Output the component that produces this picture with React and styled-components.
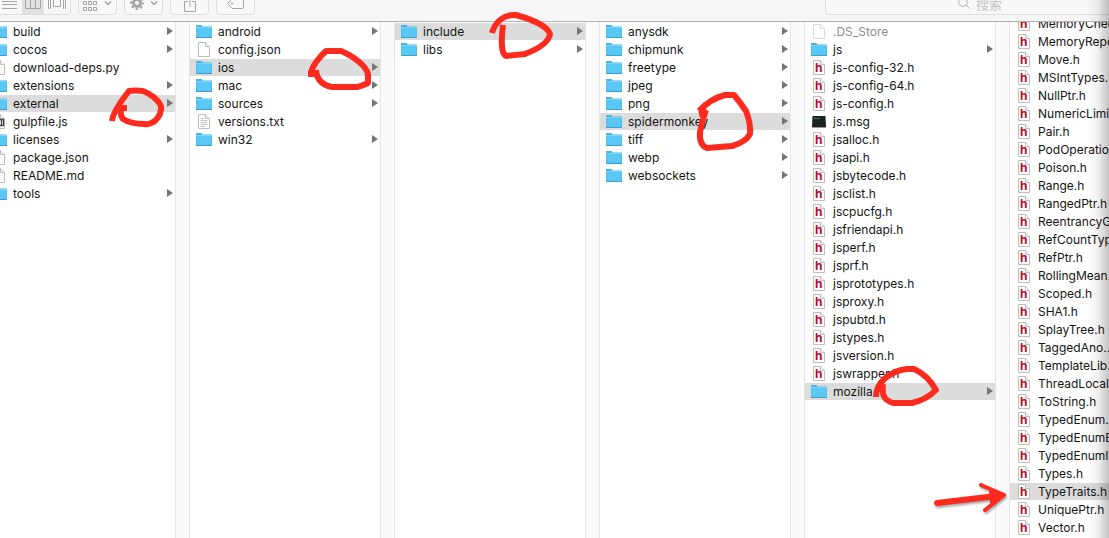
import React from 'react'
import styled, { createGlobalStyle, css } from 'styled-components'

const GlobalStyle = createGlobalStyle`
    * {
        box-sizing: border-box;
    }
    body {
        margin: 0;
        overflow: hidden;
        background-color: #fff;
        font-family: Inter, "Noto Sans CJK SC", sans-serif;
    }
`

const Window = styled.main`
    position: relative;
    display: flex;
    flex-direction: column;
    height: 100vh;
    overflow: hidden;
`

const Toolbar = styled.header`
    display: flex;
    align-items: flex-end;
    flex: none;
    gap: 7px;
    height: 22px;
    padding-bottom: 6px;
    overflow: hidden;
    background-color: #f6f6f6;
    border-bottom: 1px solid #b1b1b1;
`

const ToolButton = styled.button`
    display: flex;
    align-items: center;
    justify-content: center;
    flex: none;
    gap: 6px;
    width: 39px;
    height: 24px;
    padding: 0;
    color: #a5a5a5;
    background-color: #f8f8f8;
    border: 1px solid #dcdcdc;
    border-radius: 4px;
`

const Segments = styled.div`
    display: flex;
    flex: none;
    height: 24px;
    margin-left: -4px;
    overflow: hidden;
    border: 1px solid #dcdcdc;
    border-radius: 4px;
`

const Segment = styled.button`
    display: flex;
    align-items: center;
    justify-content: center;
    width: ${props => props.$width};
    padding: 0;
    color: #a5a5a5;
    background-color: ${props => props.$active ? '#e1e1e1' : '#f8f8f8'};
    border: 0;
`

const SearchBox = styled.label`
    display: flex;
    align-items: center;
    justify-content: center;
    flex: none;
    gap: 6px;
    width: 310px;
    height: 24px;
    margin-left: auto;
    margin-right: -26px;
    color: #b4b4b4;
    background-color: #f8f8f8;
    border: 1px solid #dcdcdc;
    border-radius: 4px;
`

const SearchInput = styled.input`
    width: 26px;
    height: 20px;
    padding: 0;
    font: 13px "Noto Sans CJK SC", sans-serif;
    background: none;
    border: 0;
    outline: 0;
    &::placeholder {
        color: #c4c4c4;
        opacity: 1;
    }
`

const Browser = styled.div`
    display: flex;
    flex: 1;
    min-height: 0;
    margin-left: -15px;
`

const Column = styled.ul`
    flex: ${props => props.$last ? '1 0 99px' : '0 0 190px'};
    min-width: 0;
    margin: 0;
    padding: 1px 0 0;
    overflow: hidden;
    list-style: none;
    background-color: #fff;
`

const Gutter = styled.div`
    flex: 0 0 15px;
    background-color: #fafafa;
    border: solid #e6e6e6;
    border-width: 0 1px;
`

const Item = styled.li`
    margin-bottom: 1px;
    &:first-child {
        margin-top: ${props => props.$scrolled ? '-8px' : '0'};
    }
`

const Row = styled.a`
    display: flex;
    align-items: center;
    height: 17px;
    padding-left: 6px;
    color: #141414;
    font-size: 12px;
    line-height: 17px;
    text-decoration: none;
    ${props => props.$selected && css`
        background-color: #dcdcdc;
    `}
    ${props => props.$faded && css`
        color: #8c8c8c;
    `}
`

const Name = styled.span`
    flex: 1;
    min-width: 0;
    margin-left: 6px;
    white-space: nowrap;
`

const Icon = styled.svg`
    flex: none;
    width: 16px;
    height: 17px;
    opacity: ${props => props.$faded ? 0.55 : 1};
`

const Arrow = styled.svg`
    flex: none;
    width: 6px;
    height: 9px;
    margin-right: 2px;
    fill: #757575;
`

const Glyph = styled.svg`
    flex: none;
    fill: none;
    stroke: currentColor;
`

const Markup = styled.svg`
    position: absolute;
    top: 0;
    left: 0;
    width: 1109px;
    height: 538px;
    pointer-events: none;
    fill: none;
    stroke: #fe2a1e;
    stroke-width: 6;
    stroke-linejoin: round;
`

const EdgeShade = styled.div`
    position: absolute;
    top: 0;
    right: 0;
    bottom: 0;
    width: 22px;
    pointer-events: none;
    background: linear-gradient(to right, rgba(0, 0, 0, 0), rgba(0, 0, 0, 0.06) 50%, rgba(0, 0, 0, 0.24));
`

const Folder = () => (
    <Icon viewBox="0 0 16 17" aria-hidden="true">
        <path d="M0 15V2.5Q0 2 .6 2H5.4L6.6 3.4H15.4Q16 3.4 16 4V15Z" fill="#47b3e0" />
        <path d="M.5 5H15.5V14H.5Z" fill="#5ac8f5" />
        <path d="M0 4.5H16" stroke="#7ad5f8" />
        <path d="M0 14.5H16" stroke="#399fc8" />
    </Icon>
)

const Page = ({ faded, children }) => (
    <Icon viewBox="0 0 16 17" aria-hidden="true" $faded={faded}>
        <path d="M2.5 1.5H9.5L13.5 5.5V15.5H2.5Z" fill="#fff" stroke="#bdbdbd" />
        <path d="M9.5 1.5V5.5H13.5" fill="#f4f4f4" stroke="#bdbdbd" />
        {children}
    </Icon>
)

const Header = () => (
    <Page>
        <text x="4" y="13" fill="#b30d2c" fontFamily="Inter, sans-serif" fontSize="12" fontWeight="700">h</text>
    </Page>
)

const TextPage = () => (
    <Page>
        <path d="M4.5 5.5H8M4.5 7.5H11.5M4.5 9.5H11.5M4.5 11.5H11.5M4.5 13.5H9" stroke="#c4c4c4" />
    </Page>
)

const Script = () => (
    <Page>
        <path d="M8 6.5H12.5V12.5H9M10.500 7V12" fill="none" stroke="#444" strokeWidth="1.3" />
    </Page>
)

const Terminal = () => (
    <Icon viewBox="0 0 16 17" aria-hidden="true">
        <path d="M1.5 3H14.5L15 14H1Z" fill="#1d2122" />
        <path d="M1 14.5H15" stroke="#989898" />
        <path d="M3 5.5H9" stroke="#2f9c60" strokeDasharray="2 .5" />
    </Icon>
)

const icons = {
    folder: Folder,
    page: Page,
    header: Header,
    text: TextPage,
    script: Script,
    terminal: Terminal,
}

const folders = names => names.map(name => ({ name, kind: 'folder' }))
const headers = names => names.map(name => ({ name, kind: 'header' }))

const columns = [
    {
        title: 'project',
        selected: 'external',
        items: [
            ...folders(['build', 'cocos']),
            { name: 'download-deps.py', kind: 'page' },
            ...folders(['extensions', 'external']),
            { name: 'gulpfile.js', kind: 'script' },
            ...folders(['licenses']),
            { name: 'package.json', kind: 'page' },
            { name: 'README.md', kind: 'page' },
            ...folders(['tools']),
        ],
    },
    {
        title: 'external',
        selected: 'ios',
        items: [
            ...folders(['android']),
            { name: 'config.json', kind: 'page' },
            ...folders(['ios', 'mac', 'sources']),
            { name: 'versions.txt', kind: 'text' },
            ...folders(['win32']),
        ],
    },
    {
        title: 'ios',
        selected: 'include',
        items: folders(['include', 'libs']),
    },
    {
        title: 'include',
        selected: 'spidermonkey',
        items: folders(['anysdk', 'chipmunk', 'freetype', 'jpeg', 'png', 'spidermonkey', 'tiff', 'webp', 'websockets']),
    },
    {
        title: 'spidermonkey',
        selected: 'mozilla',
        items: [
            { name: '.DS_Store', kind: 'page', faded: true },
            ...folders(['js']),
            ...headers(['js-config-32.h', 'js-config-64.h', 'js-config.h']),
            { name: 'js.msg', kind: 'terminal' },
            ...headers([
                'jsalloc.h', 'jsapi.h', 'jsbytecode.h', 'jsclist.h', 'jscpucfg.h', 'jsfriendapi.h', 'jsperf.h',
                'jsprf.h', 'jsprototypes.h', 'jsproxy.h', 'jspubtd.h', 'jstypes.h', 'jsversion.h', 'jswrapper.h',
            ]),
            ...folders(['mozilla']),
        ],
    },
    {
        title: 'mozilla',
        selected: 'TypeTraits.h',
        scrolled: true,
        items: headers([
            'MemoryChecking.h', 'MemoryReporting.h', 'Move.h', 'MSIntTypes.h', 'NullPtr.h', 'NumericLimits.h',
            'Pair.h', 'PodOperations.h', 'Poison.h', 'Range.h', 'RangedPtr.h', 'ReentrancyGuard.h',
            'RefCountType.h', 'RefPtr.h', 'RollingMean.h', 'Scoped.h', 'SHA1.h', 'SplayTree.h', 'TaggedAno...',
            'TemplateLib.h', 'ThreadLocal.h', 'ToString.h', 'TypedEnum.h', 'TypedEnumBits.h',
            'TypedEnumInternal.h', 'Types.h', 'TypeTraits.h', 'UniquePtr.h', 'Vector.h',
        ]),
    },
]

const Chevron = () => (
    <Glyph width={8} height={5} viewBox="0 0 8 5" strokeWidth="1.5"><path d="M1 .5L4 3.5L7 .5" /></Glyph>
)

const FinderToolbar = () => (
    <Toolbar>
        <Segments>
            <Segment $width="25px" aria-label="List">
                <Glyph width={15} height={12} viewBox="0 0 15 12"><path d="M0 .5H15M0 4.5H15M0 7.5H15M0 11.5H15" /></Glyph>
            </Segment>
            <Segment $width="22px" $active aria-label="Columns">
                <Glyph width={16} height={12} viewBox="0 0 16 12"><path d="M.5 .5H15.5V11.5H.5ZM5.5 0V12M10.5 0V12" /></Glyph>
            </Segment>
            <Segment $width="26px" aria-label="Cover flow">
                <Glyph width={18} height={12} viewBox="0 0 18 12"><path d="M.5 0V12M2.5 0V12M5.5 1.5H12.5V9.5H5.5ZM15.5 0V12M17.5 0V12" /></Glyph>
            </Segment>
        </Segments>
        <ToolButton aria-label="Arrange">
            <Glyph width={15} height={16} viewBox="0 0 15 16">
                <path d="M.5 .5H3.5V3.5H.5ZM5.5 .5H8.5V3.5H5.5ZM10.5 .5H13.5V3.5H10.5ZM.5 6.5H3.5V9.5H.5ZM5.5 6.5H8.5V9.5H5.5ZM10.5 6.5H13.5V9.5H10.5ZM.5 12.5H3.5V15.5H.5ZM5.5 12.5H8.5V15.5H5.5ZM10.5 12.5H13.5V15.5H10.5Z" />
            </Glyph>
            <Chevron />
        </ToolButton>
        <ToolButton aria-label="Action">
            <Glyph width={14} height={14} viewBox="0 0 14 14">
                <circle cx="7" cy="7" r="3.5" strokeWidth="3" />
                <circle cx="7" cy="7" r="6" strokeWidth="2" strokeDasharray="2.5 2.21" strokeDashoffset="1.25" />
            </Glyph>
            <Chevron />
        </ToolButton>
        <ToolButton aria-label="Share">
            <Glyph width={12} height={17} viewBox="0 0 12 17"><path d="M4 6.5H.5V16.5H11.5V6.5H8M6 12V1M3 4L6 1L9 4" /></Glyph>
        </ToolButton>
        <ToolButton aria-label="Tags">
            <Glyph width={17} height={11} viewBox="0 0 17 11"><path d="M5 .5H15Q16.5 .5 16.5 2V9Q16.5 10.5 15 10.5H5L.7 5.5Z" /><circle cx="5" cy="5.5" r=".8" /></Glyph>
        </ToolButton>
        <SearchBox>
            <Glyph width={12} height={12} viewBox="0 0 12 12"><circle cx="5" cy="5" r="4.3" /><path d="M8 8L11.5 11.5" /></Glyph>
            <SearchInput placeholder="搜索" aria-label="搜索" />
        </SearchBox>
    </Toolbar>
)

const FileRow = ({ item, selected, showArrow }) => {
    const Kind = icons[item.kind]
    return (
        <Row href="#" $selected={selected} $faded={item.faded}>
            <Kind faded={item.faded} />
            <Name>{item.name}</Name>
            {showArrow && (
                <Arrow viewBox="0 0 6 9" aria-hidden="true"><path d="M0 0L6 4L0 8Z" /></Arrow>
            )}
        </Row>
    )
}

const App = () => {
    return (
        <Window>
            <GlobalStyle />
            <FinderToolbar />
            <Browser>
                {columns.map((column, index) => (
                    <React.Fragment key={column.title}>
                        {index > 0 && <Gutter />}
                        <Column aria-label={column.title} $last={index === columns.length - 1}>
                            {column.items.map(item => (
                                <Item key={item.name} $scrolled={column.scrolled}>
                                    <FileRow
                                        item={item}
                                        selected={item.name === column.selected}
                                        showArrow={item.kind === 'folder'}
                                    />
                                </Item>
                            ))}
                        </Column>
                    </React.Fragment>
                ))}
            </Browser>
            <EdgeShade />
            <Markup viewBox="0 0 1109 538" aria-hidden="true">
                <path d="M112 121C113 112 121 101 129 91Q136 90 143 91Q156 96 161 106Q162 114 155 121Q149 125 144 124Q131 124 123 119Q119 113 122 108H127" />
                <path d="M308 74H318M311 73C312 67 318 58 326 51H341C355 57 366 66 368 74V83Q362 86 357 87H332Q317 84 316 70" />
                <path d="M492 33C495 22 504 14 516 15C528 18 547 25 550 34C549 42 538 49 525 54L506 56C501 53 501 42 503 25" />
                <path d="M699 114L707 112M699 111Q710 99 725 95H734Q740 102 746 111Q751 124 750 134Q746 142 732 146L707 148Q699 145 700 132Q702 121 706 110" />
                <path d="M876 397C876 383 889 371 907 369H914C923 373 931 381 936 390C929 397 921 401 912 403H893C883 400 882 394 883 384" />
                <g filter="drop-shadow(1px 2px 1px rgba(0,0,0,.35))">
                    <path d="M937 503L996 496" strokeWidth="6" strokeLinecap="round" />
                    <path d="M981 485L1004 495L985 510" strokeWidth="4" strokeLinecap="round" />
                    <path d="M990 491L1004 495L991 504Z" fill="#fe2a1e" strokeWidth="2" />
                </g>
            </Markup>
        </Window>
    )
}

export default App
